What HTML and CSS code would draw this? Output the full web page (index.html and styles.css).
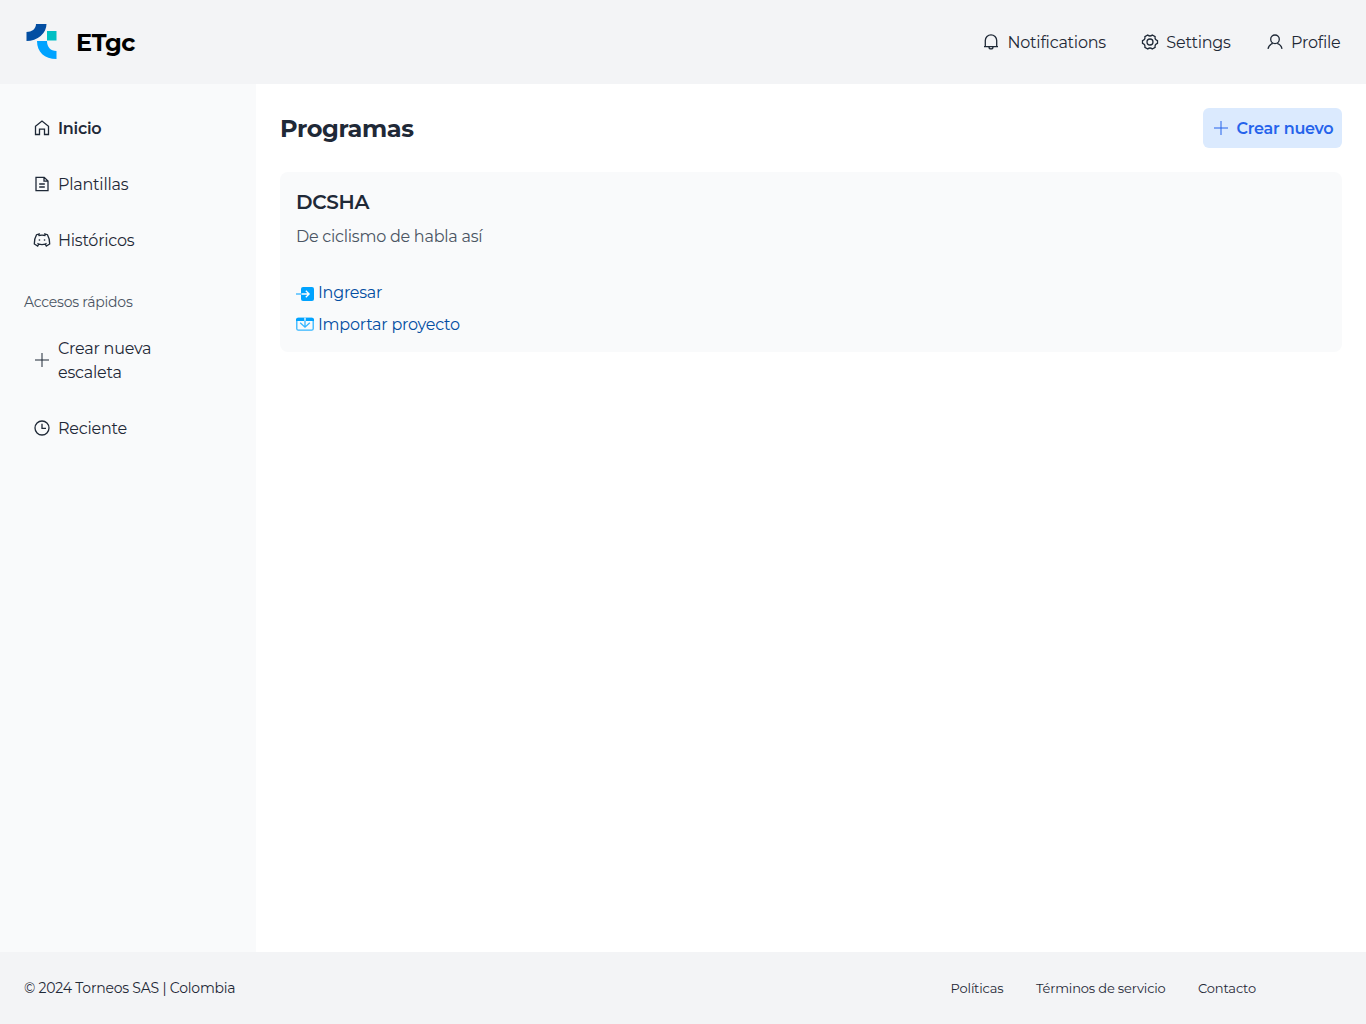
FILE: index.html
```html
<!DOCTYPE html>
<html lang="es">
<head>
<meta charset="utf-8">
<title>ETgc</title>
<link rel="stylesheet" href="styles.css">
</head>
<body>
<header class="topbar">
  <a class="brand">
    <svg class="brand-logo" viewBox="0 0 32 36"><path fill="#034ea2" d="M10 0H20.500A20 17 0 0 1 .5 17V8C5.500 8 10 5 10 0Z"/><path fill="#00bfc4" d="M21 7h9.500v9.500h-9.500z"/><path fill="#00a3ff" d="M11 17H21C21 23 24.500 27 30.500 27v8C18.500 35 11 28 11 17Z"/></svg>
    <span class="brand-name">ETgc</span>
  </a>
  <nav class="topnav">
    <a class="nav-link"><svg class="icon" viewBox="0 0 18 18"><path d="M2 13.700h14M3.300 13.700V7.600a5.700 5.700 0 0 1 11.400 0v6.100M7 13.900a2 2 0 0 0 4 0"/></svg><span>Notifications</span></a>
    <a class="nav-link"><svg class="icon" viewBox="0 0 18 18"><path d="M6.700 2Q9 4 11.300 2L14.100 3.600Q13.500 6.700 16.500 7.700V10.300Q13.500 11.300 14.100 14.400L11.300 16Q9 14 6.700 16L3.900 14.400Q4.500 11.300 1.500 10.300V7.700Q4.500 6.700 3.900 3.600Z"/><circle cx="9" cy="9" r="3"/></svg><span>Settings</span></a>
    <a class="nav-link"><svg class="icon" viewBox="0 0 18 18"><circle cx="9" cy="6.300" r="4.300"/><path d="M2 15.800a7.400 7.400 0 0 1 4.800-5.400M16 15.800a7.400 7.400 0 0 0-4.800-5.400"/></svg><span>Profile</span></a>
  </nav>
</header>
<div class="workspace">
  <aside class="sidebar">
    <a class="side-link active"><svg class="icon" viewBox="0 0 18 18"><path d="M2.500 7.200 9 2l6.500 5.200v8.300h-4V10.200h-5v5.300h-4Z"/></svg><span>Inicio</span></a>
    <a class="side-link"><svg class="icon" viewBox="0 0 18 18"><path d="M3 2.300h8.200L15 6v9.700H3ZM11 2.500V6.200h3.800M6.200 9h5.600M6.200 12h5.600"/></svg><span>Plantillas</span></a>
    <a class="side-link"><svg class="icon" viewBox="0 0 18 18"><path d="M5.500 4.500Q9 3.600 12.500 4.500M5.500 4.500 6 3 3.600 3.700Q1.300 7.500 1.300 13l3.400 2 1-1.800Q9 14 12.300 13.200l1 1.800 3.400-2Q16.700 7.500 14.400 3.700L12 3l.5 1.500M4.500 12.300l1.200.9M13.500 12.300l-1.200.9"/><path class="dots" d="M6.400 9h.1M11.500 9h.1"/></svg><span>Históricos</span></a>
    <h2 class="side-title">Accesos rápidos</h2>
    <a class="side-link"><svg class="icon thin" viewBox="0 0 18 18"><path d="M9 2v14M2 9h14"/></svg><span>Crear nueva<br>escaleta</span></a>
    <a class="side-link"><svg class="icon" viewBox="0 0 18 18"><circle cx="9" cy="9" r="7"/><path d="M9 4.800v4.500h4"/></svg><span>Reciente</span></a>
  </aside>
  <main class="content">
    <div class="content-head">
      <h1 class="page-title">Programas</h1>
      <button class="create-button"><svg class="icon thin" viewBox="0 0 18 18"><path d="M9 2v14M2 9h14"/></svg><span>Crear nuevo</span></button>
    </div>
    <section class="card">
      <h2 class="card-title">DCSHA</h2>
      <p class="card-text">De ciclismo de habla así</p>
      <a class="card-link"><svg class="icon enter" viewBox="0 0 18 18"><rect class="solid" x="5" y="3" width="13" height="14" rx="2"/><path class="tail" d="M0 10h5.500"/><path class="light" d="M5.500 10H13M9.800 6.800l3.300 3.200-3.300 3.200"/></svg><span>Ingresar</span></a>
      <a class="card-link"><svg class="icon" viewBox="0 0 18 18"><rect class="tail" x=".8" y="3.300" width="16.400" height="11.900" rx="1.500"/><path class="solid" d="M1.500 2.800h15L18 4v2H0V4z"/><path class="light" d="M9 2.800v3"/><path class="tail" d="M9 6v6M4.200 7.800 9 12.200 13.800 7.800"/></svg><span>Importar proyecto</span></a>
    </section>
  </main>
</div>
<footer class="footer">
  <p class="copyright">© 2024 Torneos SAS | Colombia</p>
  <nav class="footer-nav"><a>Políticas</a><a>Términos de servicio</a><a>Contacto</a></nav>
</footer>
</body>
</html>
```
FILE: styles.css
```css
* { box-sizing: border-box; letter-spacing: -.015em; }
body {
  margin: 0;
  height: 100vh;
  display: flex;
  flex-direction: column;
  background: #fff;
  color: #1f2937;
  font: 400 16px/24px Montserrat, Inter, sans-serif;
}
h1, h2, p { margin: 0; }
a > span, button > span { margin: 1px 0 -1px; }
.icon { width: 18px; height: 18px; flex: none; fill: none; stroke: currentColor; stroke-width: 1.3; }
.thin { stroke-width: 1; }
.dots { stroke-width: 1.6; stroke-linecap: round; }
.topbar { height: 84px; padding: 0 25.500px 0 26px; display: flex; align-items: center; justify-content: space-between; background: #f3f4f6; }
.brand { display: flex; align-items: center; gap: 18px; color: #000; }
.brand-logo { width: 32px; height: 36px; }
.brand-name { font-size: 24px; font-weight: 700; line-height: 32px; }
.topnav { display: flex; gap: 35px; }
.nav-link { display: flex; align-items: center; gap: 7.500px; }
.workspace { flex: 1; display: flex; min-height: 0; }
.sidebar { width: 256px; padding: 24px; display: flex; flex-direction: column; background: #f9fafb; }
.side-link { min-height: 40px; margin-bottom: 16px; padding: 8px 9px; display: flex; align-items: center; gap: 7px; }
.active { font-weight: 600; }
.side-title { margin: 16px 0; font-size: 14px; font-weight: 400; line-height: 20px; color: #4b5563; }
.content { flex: 1; padding: 24px; }
.content-head { height: 40px; margin-bottom: 24px; display: flex; align-items: center; justify-content: space-between; }
.page-title { margin: 1px 0 -1px; font-size: 24px; font-weight: 700; line-height: 32px; }
.create-button { width: 139.500px; height: 40px; padding: 0 9px; display: flex; align-items: center; gap: 7px; border: 0; border-radius: 6px; background: #dbeafe; color: #2563eb; font: inherit; font-weight: 600; white-space: nowrap; }
.card { height: 180px; padding: 16px; border-radius: 8px; background: #f9fafb; }
.card-title { font-size: 20px; font-weight: 600; line-height: 28px; }
.card-text { margin: 9px 0 31px; color: #4b5563; }
.card-link { height: 24px; margin-bottom: 8px; display: flex; align-items: center; gap: 4px; color: #034ea2; }
.enter { margin: 1px 0 -1px; }
.solid { fill: #00a3ff; stroke: none; }
.tail { stroke: #33b5ff; }
.light { stroke: #fff; }
.footer { height: 72px; padding: 0 110px 0 24px; display: flex; align-items: center; justify-content: space-between; background: #f3f4f6; }
.copyright { font-size: 14px; line-height: 20px; }
.footer-nav { display: flex; gap: 32.500px; font-size: 13px; line-height: 20px; }
.footer-nav a { letter-spacing: -.012em; }
```
